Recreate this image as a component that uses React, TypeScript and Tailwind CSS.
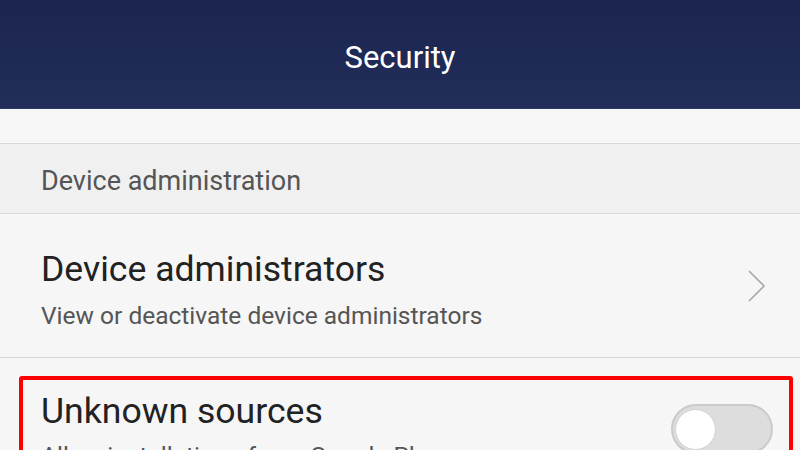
import React from "react";

export default function App() {
  const font = { fontFamily: "Roboto, 'Noto Sans', sans-serif" };
  return (
    <div
      className="w-[800px] h-[450px] overflow-hidden bg-[#f6f6f6] flex flex-col"
      style={font}
    >
      {/* Header */}
      <div className="h-[109px] shrink-0 bg-[#202b57] bg-gradient-to-b from-[#1c2550] to-[#222d5a] flex items-center justify-center pt-2 border-b border-[#2e3a66]">
        <span className="text-[31px] leading-[36px] text-white">Security</span>
      </div>

      {/* blank gap */}
      <div className="h-[35px] shrink-0 bg-[#f7f7f7] border-b border-[#d9d9d9]" />

      {/* Section header */}
      <div className="h-[70px] shrink-0 bg-[#f0f0f0] border-b border-[#d9d9d9] pl-[41px] pt-[21px]">
        <div className="text-[27px] leading-[32px] text-[#555555]">
          Device administration
        </div>
      </div>

      {/* Device administrators */}
      <div className="h-[144px] shrink-0 bg-[#f6f6f6] border-b border-[#d6d6d6] flex items-center pl-[41px] pr-[34px]">
        <div className="flex-1 flex flex-col gap-[11px] pt-[8px]">
          <div className="text-[35.6px] leading-[41px] text-[#222222]">
            Device administrators
          </div>
          <div className="text-[24.5px] leading-[29px] text-[#555555]">
            View or deactivate device administrators
          </div>
        </div>
        <svg width="18" height="32" viewBox="0 0 18 32" className="shrink-0">
          <path
            d="M1 1 L16 16 L1 31"
            fill="none"
            stroke="#a8a8a8"
            strokeWidth="1.6"
          />
        </svg>
      </div>

      {/* Unknown sources, highlighted */}
      <div className="pt-[18px] pl-[19px] pr-[7px]">
        <div className="h-[120px] border-[4px] border-[#ff0000] rounded-[3px] flex items-start pl-[18px] pr-[16px] pt-[11px]">
          <div className="flex-1 flex flex-col gap-[9px]">
            <div className="text-[35.6px] leading-[41px] text-[#222222]">
              Unknown sources
            </div>
            <div className="text-[24.5px] leading-[29px] text-[#555555] whitespace-nowrap">
              Allow installation of non-Google Play apps
            </div>
          </div>
          <div className="mt-[13px] w-[102px] h-[50px] rounded-full bg-[#dddddd] border-2 border-[#cacaca] flex items-center pl-[2px] shrink-0">
            <div className="w-[41px] h-[41px] rounded-full bg-white border border-[#d0d0d0]" />
          </div>
        </div>
      </div>
    </div>
  );
}
